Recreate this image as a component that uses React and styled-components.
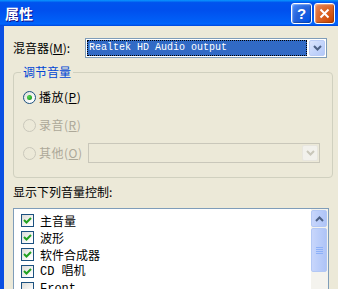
import React from "react";
import styled, { createGlobalStyle } from "styled-components";

const FONT = `"Noto Sans CJK SC", "Liberation Sans", sans-serif`;

const GlobalStyle = createGlobalStyle`
  html, body {
    margin: 0;
    padding: 0;
    background: #ECE9D8;
  }
`;

const Window = styled.div`
  width: 338px;
  height: 289px;
  overflow: hidden;
  display: flex;
  flex-direction: column;
  font-family: ${FONT};
  font-size: 12px;
  color: #000;
`;

const TitleBar = styled.div`
  height: 26px;
  flex: none;
  display: flex;
  align-items: center;
  padding: 0 3px 0 5px;
  background: linear-gradient(to bottom, #0997FF 0%, #0053EE 10%, #0050EE 40%, #0061F8 85%, #0066FF 92%, #0046DA 100%);
`;

const Title = styled.div`
  flex: 1;
  color: #fff;
  font-weight: bold;
  font-size: 14px;
  letter-spacing: 0;
  text-shadow: 1px 1px #0F1089;
`;

const CaptionButton = styled.div`
  width: 21px;
  height: 21px;
  box-sizing: border-box;
  margin-left: 2px;
  border: 1px solid #fff;
  border-radius: 3px;
  display: flex;
  align-items: center;
  justify-content: center;
  color: #fff;
  font-family: "Liberation Sans", sans-serif;
  font-weight: bold;
  font-size: 15px;
  background: ${({ $close }) =>
    $close
      ? "radial-gradient(circle at 90% 90%, #CC4600 0%, #DC6527 55%, #E78B64 100%)"
      : "radial-gradient(circle at 90% 90%, #0054E9 0%, #2663DA 55%, #4F8FFD 100%)"};
  box-shadow: inset -1px -1px 1px rgba(0, 0, 0, 0.25), inset 1px 1px 1px rgba(255, 255, 255, 0.35);
`;

const Body = styled.div`
  flex: 1;
  background: #ECE9D8;
  border-left: 4px solid #0A4FE2;
  padding: 12px 0 0 9px;
  display: flex;
  flex-direction: column;
`;

const MixerRow = styled.div`
  display: flex;
  align-items: center;
  height: 20px;
`;

const Label = styled.div`
  width: 72px;
  flex: none;
  line-height: 14px;
  color: ${({ $disabled }) => ($disabled ? "#ACA899" : "#000")};
`;

const Combo = styled.div`
  width: ${({ $w }) => $w}px;
  height: 20px;
  box-sizing: border-box;
  border: 1px solid ${({ $disabled }) => ($disabled ? "#C9C7BA" : "#7F9DB9")};
  background: ${({ $disabled }) => ($disabled ? "#ECE9D8" : "#fff")};
  display: flex;
  align-items: center;
  padding: 1px;
`;

const ComboValue = styled.div`
  flex: 1;
  height: 16px;
  margin-right: 2px;
  background: #316AC5;
  outline: 1px dotted #000;
  outline-offset: -1px;
  color: #fff;
  font-family: "Liberation Mono", monospace;
  font-size: 10px;
  line-height: 16px;
  padding-left: 2px;
`;

const DropButton = styled.div`
  width: 16px;
  height: 16px;
  margin-left: auto;
  box-sizing: border-box;
  border-radius: 2px;
  border: 1px solid ${({ $disabled }) => ($disabled ? "#E8E6DE" : "#BACCF6")};
  background: ${({ $disabled }) =>
    $disabled ? "#F2F1EC" : "linear-gradient(135deg, #DAE4FD 0%, #C1D3FB 60%, #B4C8F8 100%)"};
  display: flex;
  align-items: center;
  justify-content: center;
`;

const Chevron = ({ color }) => (
  <svg width="9" height="6" viewBox="0 0 9 6">
    <path d="M1 1 L4.5 4.5 L8 1" fill="none" stroke={color} strokeWidth="2" />
  </svg>
);

const GroupBox = styled.div`
  position: relative;
  width: 320px;
  box-sizing: border-box;
  margin-top: 14px;
  border: 1px solid #D0D0BF;
  border-radius: 4px;
  padding: 10px 0 10px 9px;
`;

const GroupTitle = styled.div`
  position: absolute;
  top: -8px;
  left: 7px;
  padding: 0 2px;
  background: #ECE9D8;
  color: #0046D5;
  line-height: 14px;
`;

const RadioRow = styled.div`
  height: 28px;
  display: flex;
  align-items: center;
`;

const RadioCircle = styled.div`
  width: 13px;
  height: 13px;
  box-sizing: border-box;
  border-radius: 50%;
  border: 1px solid ${({ $disabled }) => ($disabled ? "#CAC8BB" : "#1C5180")};
  background: ${({ $disabled }) =>
    $disabled ? "#ECE9D8" : "linear-gradient(135deg, #DCDCD7 0%, #fff 80%)"};
  display: flex;
  align-items: center;
  justify-content: center;
  margin-right: 3px;
  flex: none;
`;

const RadioDot = styled.div`
  width: 5px;
  height: 5px;
  border-radius: 50%;
  background: radial-gradient(circle at 35% 35%, #55D551 0%, #21A121 70%);
`;

const RadioLabel = styled.div`
  width: 49px;
  line-height: 14px;
  letter-spacing: 0.5px;
  color: ${({ $disabled }) => ($disabled ? "#ACA899" : "#000")};
`;

const ListLabel = styled.div`
  margin-top: 7px;
  line-height: 14px;
  height: 14px;
`;

const ListBox = styled.div`
  margin-top: 9px;
  width: 316px;
  flex: 1;
  box-sizing: border-box;
  border: 1px solid #7F9DB9;
  border-bottom: none;
  background: #fff;
  display: flex;
`;

const Items = styled.div`
  flex: 1;
  padding: 3px 0 0 7px;
`;

const Item = styled.div`
  height: 17px;
  display: flex;
  align-items: center;
`;

const CheckBox = styled.div`
  width: 13px;
  height: 13px;
  box-sizing: border-box;
  border: 1px solid #1C5180;
  background: linear-gradient(135deg, #DCDCD7 0%, #fff 85%);
  margin-right: 6px;
  display: flex;
  align-items: center;
  justify-content: center;
  flex: none;
`;

const ItemText = styled.div`
  line-height: 14px;
  font-family: ${({ $latin }) => ($latin ? `"Liberation Mono", ${FONT}` : FONT)};
`;

const ScrollBar = styled.div`
  width: 17px;
  flex: none;
  background: #F4F3EE;
  display: flex;
  flex-direction: column;
  padding: 1px 1px 0 0;
  box-sizing: border-box;
`;

const ScrollPart = styled.div`
  height: ${({ $h }) => $h}px;
  margin-bottom: 1px;
  box-sizing: border-box;
  border: 1px solid #B3C8F5;
  border-radius: 2px;
  background: linear-gradient(to right, #C8D6FB 0%, #BACDFA 50%, #AFC4F7 100%);
  display: flex;
  align-items: center;
  justify-content: center;
`;

const Check = () => (
  <svg width="9" height="9" viewBox="0 0 9 9">
    <path d="M1 4 L3.5 6.5 L8 2" fill="none" stroke="#21A121" strokeWidth="2" />
  </svg>
);

const items = [
  ["主音量", true],
  ["波形", true],
  ["软件合成器", true],
  ["CD 唱机", true],
  ["Front", false],
];

export default function App() {
  return (
    <Window>
      <GlobalStyle />
      <TitleBar>
        <Title>属性</Title>
        <CaptionButton>?</CaptionButton>
        <CaptionButton $close>
          <svg width="11" height="11" viewBox="0 0 11 11">
            <path d="M1.5 1.5 L9.5 9.5 M9.5 1.5 L1.5 9.5" stroke="#fff" strokeWidth="2" />
          </svg>
        </CaptionButton>
      </TitleBar>
      <Body>
        <MixerRow>
          <Label>混音器(<u>M</u>):</Label>
          <Combo $w={242}>
            <ComboValue>Realtek HD Audio output</ComboValue>
            <DropButton><Chevron color="#4D6185" /></DropButton>
          </Combo>
        </MixerRow>
        <GroupBox>
          <GroupTitle>调节音量</GroupTitle>
          <RadioRow>
            <RadioCircle><RadioDot /></RadioCircle>
            <RadioLabel>播放(<u>P</u>)</RadioLabel>
          </RadioRow>
          <RadioRow>
            <RadioCircle $disabled />
            <RadioLabel $disabled>录音(<u>R</u>)</RadioLabel>
          </RadioRow>
          <RadioRow>
            <RadioCircle $disabled />
            <RadioLabel $disabled>其他(<u>O</u>)</RadioLabel>
            <Combo $w={232} $disabled>
              <DropButton $disabled><Chevron color="#C9C7BA" /></DropButton>
            </Combo>
          </RadioRow>
        </GroupBox>
        <ListLabel>显示下列音量控制:</ListLabel>
        <ListBox>
          <Items>
            {items.map(([text, checked]) => (
              <Item key={text}>
                <CheckBox>{checked && <Check />}</CheckBox>
                <ItemText $latin={/^[A-Z]/.test(text)}>{text}</ItemText>
              </Item>
            ))}
          </Items>
          <ScrollBar>
            <ScrollPart $h={17}>
              <svg width="9" height="6" viewBox="0 0 9 6">
                <path d="M1 5 L4.5 1.5 L8 5" fill="none" stroke="#4D6185" strokeWidth="2" />
              </svg>
            </ScrollPart>
            <ScrollPart $h={44}>
              <svg width="7" height="8" viewBox="0 0 7 8">
                <path d="M0 1.5 H7 M0 3.5 H7 M0 5.5 H7 M0 7.5 H7" stroke="#8CB0F8" strokeWidth="1" />
              </svg>
            </ScrollPart>
          </ScrollBar>
        </ListBox>
      </Body>
    </Window>
  );
}
